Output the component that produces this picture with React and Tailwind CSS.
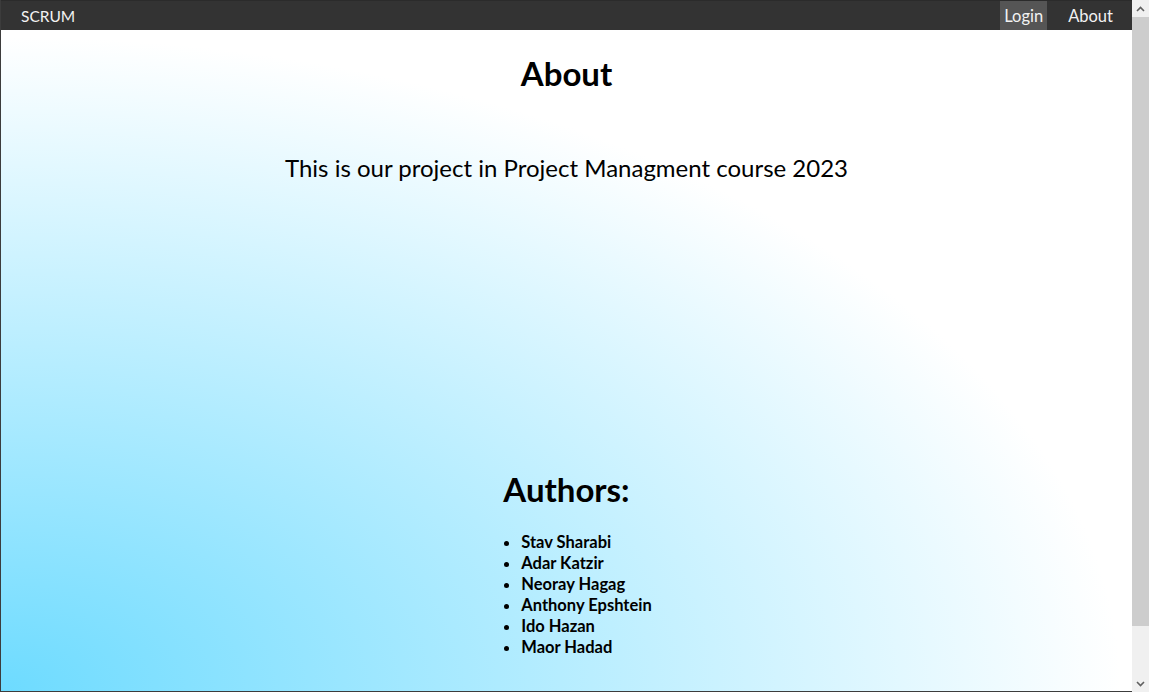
import React from "react";

export default function App() {
  const authors = [
    "Stav Sharabi",
    "Adar Katzir",
    "Neoray Hagag",
    "Anthony Epshtein",
    "Ido Hazan",
    "Maor Hadad",
  ];
  return (
    <div className="flex h-[692px] w-[1149px] overflow-hidden font-['Lato',sans-serif] text-black">
      <div className="flex h-full flex-1 flex-col border-l border-b border-[#3c3c3c]">
        <nav className="flex h-[30px] items-stretch bg-[#333333] border-t border-[#2b2b2b]">
          <div className="flex items-center pl-[20px] pt-[2px] text-[15.5px] text-[#f2f2f2]">SCRUM</div>
          <div className="ml-auto flex items-stretch pr-[15px] text-[16.5px] text-[#f2f2f2]">
            <div className="flex items-center bg-[#555555] px-[4px] pt-[2px]">Login</div>
            <div className="flex items-center pl-[21px] pr-[4px] pt-[2px]">About</div>
          </div>
        </nav>
        <main className="flex-1 bg-[radial-gradient(ellipse_at_bottom_left,#6ddbff_0%,#ffffff_70%)] text-center">
          <h1 className="mt-[22px] text-[33px] font-bold leading-[43px]">About</h1>
          <p className="mt-[57px] text-[24px] leading-[32px]">
            This is our project in Project Managment course 2023
          </p>
          <h1 className="mt-[284px] text-[33px] font-bold leading-[43px]">Authors:</h1>
          <ul className="mt-[21px] inline-block list-disc pl-[40px] text-left text-[16.5px] font-bold leading-[21px]">
            {authors.map((a) => (
              <li key={a}>{a}</li>
            ))}
          </ul>
        </main>
      </div>
      <div className="flex h-full w-[17px] flex-col bg-[#f0f0f0]">
        <div className="flex h-[17px] items-center justify-center">
          <svg width="9" height="6" viewBox="0 0 9 6">
            <path d="M1 5 L4.5 1.5 L8 5" fill="none" stroke="#606060" strokeWidth="1.6" />
          </svg>
        </div>
        <div className="h-[609px] bg-[#cdcdcd]" />
        <div className="flex-1" />
        <div className="flex h-[17px] items-center justify-center">
          <svg width="9" height="6" viewBox="0 0 9 6">
            <path d="M1 1 L4.5 4.5 L8 1" fill="none" stroke="#606060" strokeWidth="1.6" />
          </svg>
        </div>
      </div>
    </div>
  );
}
